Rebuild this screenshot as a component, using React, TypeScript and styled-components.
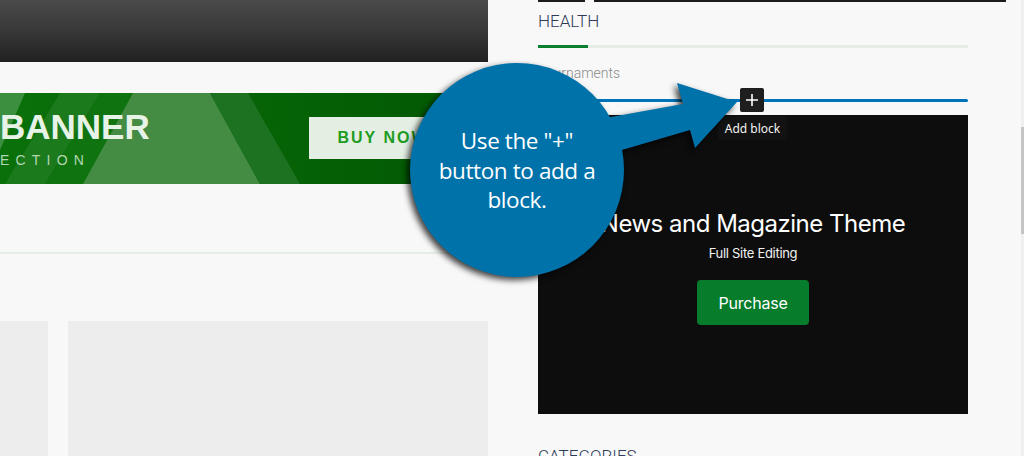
import React from "react";
import styled, { createGlobalStyle } from "styled-components";

const GlobalStyle = createGlobalStyle`
  html, body {
    margin: 0;
    padding: 0;
    background: #f8f8f8;
    overflow: hidden;
    font-family: Roboto, "Liberation Sans", sans-serif;
  }
`;

const Page = styled.div`
  position: relative;
  display: flex;
  width: 1024px;
  height: 456px;
  overflow: hidden;
  background: #f8f8f8;
`;

/* ---------- left column ---------- */

const LeftCol = styled.div`
  display: flex;
  flex-direction: column;
  flex-shrink: 0;
  width: 488px;

  & > * {
    flex-shrink: 0;
  }
`;

const HeaderBar = styled.div`
  height: 62px;
  background: linear-gradient(to bottom, #4a4a4a 0%, #363636 55%, #212121 100%);
`;

const Banner = styled.div`
  display: grid;
  margin-top: 31px;
  height: 91px;
  overflow: hidden;

  & > * {
    grid-area: 1 / 1;
  }
`;

const BannerArt = styled.svg`
  display: block;
  width: 488px;
  height: 91px;
`;

const BannerContent = styled.div`
  display: flex;
  align-items: flex-start;
`;

const BannerTitle = styled.div`
  width: 309px;
  padding-top: 16px;
`;

const BannerHeadline = styled.div`
  font-family: "Liberation Sans", Arial, sans-serif;
  font-weight: 700;
  font-size: 35px;
  line-height: 36px;
  color: #e8f3e8;
`;

const BannerSub = styled.div`
  margin-top: 7px;
  font-family: "Liberation Sans", Arial, sans-serif;
  font-size: 14px;
  line-height: 16px;
  letter-spacing: 6.2px;
  color: #b3d6b3;
`;

const BuyButton = styled.div`
  margin-top: 24px;
  width: 148px;
  height: 42px;
  display: flex;
  align-items: center;
  justify-content: center;
  background: #e4efe4;
  color: #1f9c22;
  font-family: "Liberation Sans", Arial, sans-serif;
  font-weight: 700;
  font-size: 16px;
  letter-spacing: 2px;
`;

const Divider = styled.div`
  margin-top: 68px;
  height: 2px;
  background: #e5eee4;
`;

const CardRow = styled.div`
  flex: 1 0 auto;
  display: grid;
  grid-template-columns: 48px 1fr;
  gap: 20px;
  margin-top: 67px;
`;

const Card = styled.div`
  background: #ededed;
`;

/* ---------- right column ---------- */

const RightCol = styled.div`
  display: flex;
  flex-direction: column;
  flex-shrink: 0;
  width: 430px;
  margin-left: 50px;

  & > * {
    flex-shrink: 0;
  }
`;

const TopRules = styled.div`
  display: flex;
  gap: 9px;
  width: 468px;
`;

const Rule = styled.div<{ $w: number }>`
  width: ${(p) => p.$w}px;
  height: 2px;
  background: #1c1c1c;
`;

const WidgetTitle = styled.div<{ $top: number }>`
  margin-top: ${(p) => p.$top}px;
  font-size: 17px;
  font-weight: 300;
  line-height: 24px;
  color: #2d3b58;
`;

const TitleBar = styled.div`
  display: flex;
  margin-top: 12px;
  height: 3px;
  background: #e5ede4;

  &::before {
    content: "";
    width: 50px;
    background: #0a7f2e;
  }
`;

const Tag = styled.div`
  margin-top: 15px;
  font-size: 14px;
  font-weight: 300;
  line-height: 20px;
  color: #8b8b8b;
`;

const Inserter = styled.div`
  position: relative;
  display: grid;
  align-items: center;
  margin-top: 5px;
  height: 24px;

  & > * {
    grid-area: 1 / 1;
  }
`;

const InsertLine = styled.div`
  height: 3px;
  border-radius: 2px;
  background: #0073b8;
`;

const PlusButton = styled.div`
  justify-self: start;
  margin-left: 202px;
  width: 24px;
  height: 24px;
  display: flex;
  align-items: center;
  justify-content: center;
  border-radius: 2px;
  background: #1e1e1e;
`;

const Tooltip = styled.div`
  position: absolute;
  top: 28px;
  left: 180px;
  z-index: 2;
  width: 69px;
  height: 24px;
  display: flex;
  align-items: center;
  justify-content: center;
  border-radius: 2px;
  background: #121212;
  color: #f2f2f2;
  font-family: "Noto Sans", "Open Sans", sans-serif;
  font-size: 12px;
`;

const Promo = styled.div`
  display: flex;
  flex-direction: column;
  align-items: center;
  margin-top: 3px;
  height: 299px;
  padding-top: 94px;
  box-sizing: border-box;
  background: #0d0d0d;
  font-family: Inter, "Noto Sans", sans-serif;
  color: #fff;
`;

const PromoTitle = styled.div`
  font-size: 24px;
  line-height: 30px;
  letter-spacing: -0.5px;
`;

const PromoSub = styled.div`
  margin-top: 5px;
  font-size: 13px;
  line-height: 18px;
  letter-spacing: -0.3px;
  color: #f2f2f2;
`;

const PurchaseButton = styled.div`
  margin-top: 18px;
  width: 112px;
  height: 45px;
  display: flex;
  align-items: center;
  justify-content: center;
  border-radius: 4px;
  background: #077d2c;
  font-size: 16px;
  letter-spacing: -0.2px;
`;

/* ---------- scrollbar ---------- */

const ScrollTrack = styled.div`
  margin-left: auto;
  width: 3px;
  background: #efefef;
`;

const ScrollThumb = styled.div`
  margin-top: 127px;
  height: 107px;
  background: #c4c4c4;
`;

/* ---------- callout annotation ---------- */

const Callout = styled.div`
  position: absolute;
  left: 400px;
  top: 55px;
  width: 345px;
  height: 240px;
  pointer-events: none;
  z-index: 5;
`;

const CalloutShape = styled.svg`
  display: block;
  overflow: visible;
  filter: drop-shadow(-3px 3px 3px rgba(0, 0, 0, 0.75));
`;

const CalloutText = styled.div`
  position: absolute;
  left: 0px;
  top: 71px;
  width: 234px;
  text-align: center;
  font-family: "Open Sans", "Noto Sans", sans-serif;
  font-size: 22.5px;
  line-height: 29.5px;
  letter-spacing: -0.4px;
  color: #fff;
`;

export default function App() {
  return (
    <Page>
      <GlobalStyle />
      <LeftCol>
        <HeaderBar />
        <Banner>
          <BannerArt viewBox="0 0 488 91">
            <defs>
              <linearGradient id="bannerBg" x1="0" x2="1" y1="0" y2="0">
                <stop offset="0" stopColor="#0a710a" />
                <stop offset="1" stopColor="#025802" />
              </linearGradient>
            </defs>
            <rect width="488" height="91" fill="url(#bannerBg)" />
            <polygon points="0,0 25,0 -15,91 -40,91" fill="#3b8f3f" />
            <polygon points="-40,91 -15,91 0,58 0,91" fill="#2a832f" />
            <polygon points="60,0 100,0 45,91 5,91" fill="#1b7a1c" />
            <polygon points="100,0 133,0 83,91 45,91" fill="#0f740f" />
            <polygon points="133,0 210,0 260,91 83,91" fill="#448c44" />
            <polygon points="210,0 248,0 300,91 260,91" fill="#1c7220" />
          </BannerArt>
          <BannerContent>
            <BannerTitle>
              <BannerHeadline>BANNER</BannerHeadline>
              <BannerSub>ECTION</BannerSub>
            </BannerTitle>
            <BuyButton>BUY NOW</BuyButton>
          </BannerContent>
        </Banner>
        <Divider />
        <CardRow>
          <Card />
          <Card />
        </CardRow>
      </LeftCol>

      <RightCol>
        <TopRules>
          <Rule $w={47} />
          <Rule $w={412} />
        </TopRules>
        <WidgetTitle $top={7}>HEALTH</WidgetTitle>
        <TitleBar />
        <Tag>Tournaments</Tag>
        <Inserter>
          <InsertLine />
          <PlusButton>
            <svg width="14" height="14" viewBox="0 0 14 14">
              <path d="M7 1v12M1 7h12" stroke="#fff" strokeWidth="1.6" />
            </svg>
          </PlusButton>
          <Tooltip>Add block</Tooltip>
        </Inserter>
        <Promo>
          <PromoTitle>News and Magazine Theme</PromoTitle>
          <PromoSub>Full Site Editing</PromoSub>
          <PurchaseButton>Purchase</PurchaseButton>
        </Promo>
        <WidgetTitle $top={30}>CATEGORIES</WidgetTitle>
      </RightCol>

      <ScrollTrack>
        <ScrollThumb />
      </ScrollTrack>

      <Callout>
        <CalloutShape width="345" height="240" viewBox="0 0 345 240">
          <g fill="#0072aa">
            <circle cx="117" cy="115" r="107" />
            <polygon points="200,64 283,49 277,28 337,47 295,93 290,75 215,97" />
          </g>
        </CalloutShape>
        <CalloutText>
          Use the "+"
          <br />
          button to add a
          <br />
          block.
        </CalloutText>
      </Callout>
    </Page>
  );
}
